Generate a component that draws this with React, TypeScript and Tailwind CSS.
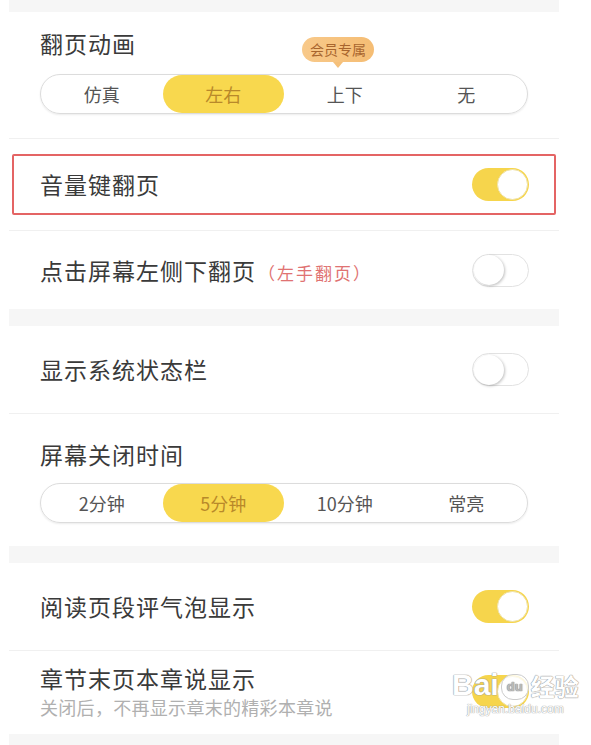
import React from 'react';

const font = { fontFamily: '"Noto Sans CJK SC", "Noto Sans", sans-serif' };

const Toggle: React.FC<{ on: boolean }> = ({ on }) =>
  on ? (
    <div className="w-[57px] h-[33px] rounded-full bg-[#f6d54c] flex items-center justify-end pr-[1px]">
      <div className="w-[31px] h-[31px] rounded-full bg-white border border-[#efe2a8]" />
    </div>
  ) : (
    <div className="w-[57px] h-[33px] rounded-full bg-white border border-[#e2e2e2] flex items-center pl-[1px]">
      <div className="w-[30px] h-[30px] rounded-full bg-white shadow-[1px_1px_3px_rgba(0,0,0,0.25)]" />
    </div>
  );

const Segmented: React.FC<{ items: string[]; active: number; badgeAt?: number }> = ({ items, active, badgeAt }) => (
  <div className="mx-[31px] h-[40px] rounded-full border border-[#dcdcdc] shadow-[0_1px_2px_rgba(0,0,0,0.08)] grid grid-cols-4 relative">
    {items.map((t, i) => (
      <div
        key={t}
        className={`relative flex items-center justify-center text-[18px] rounded-full ${
          i === active ? 'bg-[#f8d84e] text-[#b8892a]' : 'text-[#555]'
        }`}
      >
        {t}
        {badgeAt === i && (
          <div className="absolute left-[18px] top-[-38px] flex flex-col items-center">
            <div className="h-[25px] px-[8px] rounded-full bg-gradient-to-r from-[#f8c98a] to-[#f5bd74] text-[#a8652e] text-[14px] leading-[25px]">
              会员专属
            </div>
            <div className="w-0 h-0 border-l-[5px] border-r-[5px] border-t-[6px] border-l-transparent border-r-transparent border-t-[#f5c07a]" />
          </div>
        )}
      </div>
    ))}
  </div>
);

const Row: React.FC<{ children: React.ReactNode; on: boolean; h: string }> = ({ children, on, h }) => (
  <div className={`${h} pl-[31px] pr-[30px] flex items-center justify-between`}>
    <div className="text-[23px] text-[#3a3a3a] tracking-[1px]">{children}</div>
    <Toggle on={on} />
  </div>
);

const Divider = () => <div className="h-px bg-[#f0f0f0]" />;

export default function App() {
  return (
    <div className="w-[591px] h-[745px] bg-white overflow-hidden relative" style={font}>
      <div className="ml-[9px] w-[550px] bg-[#f6f6f6] pt-[12px] flex flex-col gap-[17px]">
        <section className="bg-white">
          <div className="pt-[15px] pl-[31px] text-[23px] leading-[32px] text-[#3a3a3a] tracking-[1px]">翻页动画</div>
          <div className="mt-[15px] pb-[24px]">
            <Segmented items={['仿真', '左右', '上下', '无']} active={1} badgeAt={2} />
          </div>
          <Divider />
          <div className="h-[91px] pt-[15px] px-[3px]">
            <div className="h-[61px] border-2 border-[#e46464] rounded-[2px] pl-[26px] pr-[25px] flex items-center justify-between">
              <div className="text-[23px] text-[#3a3a3a] tracking-[1px]">音量键翻页</div>
              <Toggle on />
            </div>
          </div>
          <Divider />
          <Row h="h-[78px]" on={false}>
            点击屏幕左侧下翻页
            <span className="text-[17px] text-[#e07272] tracking-[2px] ml-[2px]">（左手翻页）</span>
          </Row>
        </section>

        <section className="bg-white">
          <Row h="h-[87px]" on={false}>显示系统状态栏</Row>
          <Divider />
          <div className="pt-[24px] pl-[31px] text-[23px] leading-[32px] text-[#3a3a3a] tracking-[1px]">屏幕关闭时间</div>
          <div className="mt-[13px] pb-[23px]">
            <Segmented items={['2分钟', '5分钟', '10分钟', '常亮']} active={1} />
          </div>
        </section>

        <section className="bg-white">
          <Row h="h-[87px]" on>阅读页段评气泡显示</Row>
          <Divider />
          <div className="pt-[11px] pb-[14px] pl-[31px] pr-[30px] flex items-center justify-between">
            <div>
              <div className="text-[23px] leading-[32px] text-[#3a3a3a] tracking-[1px]">章节末页本章说显示</div>
              <div className="text-[18px] leading-[26px] text-[#b0b0b0] tracking-[0.3px]">关闭后，不再显示章末的精彩本章说</div>
            </div>
            <Toggle on />
          </div>
        </section>
        <div className="h-[10px]" />
      </div>

      <div className="absolute left-[452px] top-[670px] flex flex-col items-center pointer-events-none">
        <div className="flex items-end gap-[2px] text-white text-[30px] leading-[30px] font-bold [text-shadow:0_0_1px_#999,0_0_1px_#999,0_0_1px_#999]" style={{ fontFamily: 'Arial, "Liberation Sans", sans-serif' }}>
          <span>Bai</span>
          <span className="w-[28px] h-[26px] rounded-[12px] bg-white/80 border border-[#ccc] text-[#bbb] text-[13px] leading-[24px] text-center">du</span>
          <span className="text-[24px] leading-[28px]" style={font}>经验</span>
        </div>
        <div className="text-[12px] text-white [text-shadow:0_0_1px_#999,0_0_1px_#999]" style={{ fontFamily: 'Arial, "Liberation Sans", sans-serif' }}>jingyan.baidu.com</div>
      </div>
    </div>
  );
}
